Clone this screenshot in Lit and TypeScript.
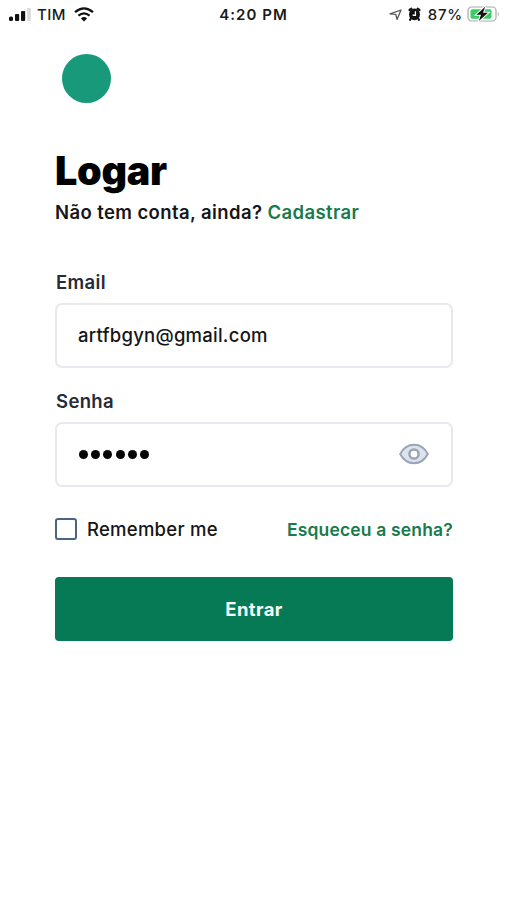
import { LitElement, html, css } from "lit";
import { customElement, property, state } from "lit/decorators.js";

@customElement("status-bar")
class StatusBar extends LitElement {
  static styles = css`
    :host {
      display: grid;
      grid-template-columns: 1fr auto 1fr;
      align-items: center;
      height: 28px;
      padding: 0 6px 0 8px;
      color: #1a1a1a;
      font-size: 15px;
      line-height: 26px;
    }
    svg { display: block; flex: none; }
    span { padding-top: 2px; }
    .left, .right { display: flex; align-items: center; }
    .right { justify-content: flex-end; }
    .bars { margin-right: 6px; }
    .carrier { margin-right: 8px; font-weight: 500; letter-spacing: 0.45px; }
    .time { margin-right: 1px; font-weight: 600; letter-spacing: 1.05px; }
    .arrow { margin-right: 6px; }
    .alarm { margin-right: 7px; }
    .pct { margin-right: 4px; font-weight: 500; letter-spacing: 0.75px; }
  `;
  render() {
    return html`
      <div class="left">
        <svg class="bars" width="23" height="16" viewBox="0 0 23 16">
          <rect x="1" y="10.5" width="4" height="4.5" rx="1.5" fill="#111" />
          <rect x="7" y="8" width="4.2" height="7" rx="1" fill="#111" />
          <rect x="13" y="5" width="4.2" height="10" rx="1" fill="#111" />
          <rect x="19" y="2" width="4" height="13" rx="1" fill="#dcdcdc" />
        </svg>
        <span class="carrier">TIM</span>
        <svg width="20" height="15" viewBox="0 0 20 15" fill="none" stroke="#111" stroke-width="2.2">
          <path d="M1 5.2Q10-2.4 19 5.2" />
          <path d="M4.4 8.7Q10 4 15.6 8.7" />
          <path d="M10 14.6L6.9 11.4Q10 8.8 13.1 11.4Z" fill="#111" stroke="none" />
        </svg>
      </div>
      <span class="time">4:20 PM</span>
      <div class="right">
        <svg class="arrow" width="13" height="13" viewBox="0 0 13 13" fill="none" stroke="#555" stroke-width="1.3" stroke-linejoin="round">
          <path d="M12 2L1 5.8L6.8 6.3L8 11.4Z" />
        </svg>
        <svg class="alarm" width="13" height="14" viewBox="0 0 14 14" preserveAspectRatio="none">
          <path d="M1.6 3L3.6 1.6M12.4 3L10.4 1.6M3 11.6L2.2 12.8M11 11.6L11.8 12.8" stroke="#111" stroke-width="2.2" stroke-linecap="round" />
          <circle cx="7" cy="7.4" r="5.9" fill="#111" />
          <path d="M8 4.3V8.2H5" fill="none" stroke="#fff" stroke-width="1.4" />
        </svg>
        <span class="pct">87%</span>
        <svg width="33" height="18" viewBox="0 0 33 18">
          <rect x="1" y="2" width="28" height="14" rx="3.6" fill="#fff" stroke="#aaa" stroke-width="1.2" />
          <rect x="3.5" y="4.3" width="21" height="9.4" rx="2" fill="#35cf63" />
          <path d="M30.8 6.7Q33 9 30.8 11.4Z" fill="#aaa" />
          <path d="M18.2 1.8L9.4 9.7H14L11.8 16L21 7.8H16Z" fill="#111" stroke="#fff" stroke-width="2" paint-order="stroke" />
        </svg>
      </div>
    `;
  }
}

@customElement("text-field")
class TextField extends LitElement {
  @property() label = "";
  @property() value = "";
  @property({ type: Boolean }) secret = false;

  static styles = css`
    :host { display: block; }
    .label {
      padding: 0 0 2px 1px;
      font-size: 18.5px;
      line-height: 22px;
      font-weight: 600;
      letter-spacing: 0.35px;
      color: #252b38;
    }
    .box {
      box-sizing: border-box;
      display: flex;
      align-items: center;
      justify-content: space-between;
      height: 65px;
      margin-top: 8px;
      padding: 0 22px 0 21px;
      border: 2px solid #e7e9f0;
      border-radius: 7px;
      background: #fff;
      font-size: 18.5px;
      font-weight: 500;
      letter-spacing: 0.25px;
      color: #151515;
    }
    .value { padding-bottom: 2px; }
    .dots { display: flex; gap: 3.2px; padding-left: 1px; }
    .dot { width: 9px; height: 9px; border-radius: 50%; background: #050505; }
    svg { display: block; margin-bottom: 2px; }
  `;
  render() {
    return html`
      <div class="label">${this.label}</div>
      <div class="box">
        ${this.secret
          ? html`
              <div class="dots">${[...this.value].map(() => html`<span class="dot"></span>`)}</div>
              <svg width="30" height="22" viewBox="0 0 30 22" stroke="#9ba5b6" stroke-width="2">
                <path d="M1.2 11C4.5 4.6 9.2 1.8 15 1.8S25.5 4.6 28.8 11C25.5 17.4 20.8 20.2 15 20.2S4.5 17.4 1.2 11Z" fill="#dde3ec" />
                <circle cx="15" cy="11" r="4.6" fill="#fff" stroke-width="2.5" />
              </svg>
            `
          : html`<span class="value">${this.value}</span>`}
      </div>
    `;
  }
}

@customElement("app-root")
class AppRoot extends LitElement {
  @state() private remember = false;

  static styles = css`
    :host {
      display: block;
      height: 900px;
      background: #fff;
      color: #161616;
      font-family: Inter, "Liberation Sans", sans-serif;
      overflow: hidden;
    }
    main { padding: 26px 53px 0 55px; }
    .logo { width: 49px; height: 49px; margin-left: 7px; border-radius: 50%; background: #18997a; }
    h1 {
      margin: 44px 0 0;
      font-size: 39.5px;
      line-height: 48px;
      font-weight: 900;
      letter-spacing: -0.3px;
      color: #000;
    }
    .sub { margin: 5px 0 0; font-size: 18.5px; line-height: 24px; font-weight: 600; letter-spacing: 0.4px; }
    .green { color: #177b4b; }
    .email { margin-top: 47px; }
    .password { margin-top: 22px; }
    .row { display: flex; align-items: center; height: 24px; margin-top: 30px; }
    .check { box-sizing: border-box; width: 22px; height: 22px; border: 2px solid #4b6485; border-radius: 3px; }
    .check.on { background: #4b6485; }
    .remember { margin-left: 10px; font-size: 18.5px; font-weight: 500; letter-spacing: 0.25px; }
    .forgot { margin-left: auto; font-size: 17.5px; font-weight: 600; letter-spacing: 0.16px; }
    .submit {
      display: block;
      width: 100%;
      height: 64px;
      margin-top: 36px;
      padding: 0;
      border: 0;
      border-radius: 4px;
      background: #067a54;
      color: #f4fbf8;
      font: 700 18.5px Inter, "Liberation Sans", sans-serif;
      letter-spacing: 0.4px;
    }
  `;
  render() {
    return html`
      <status-bar></status-bar>
      <main>
        <div class="logo"></div>
        <h1>Logar</h1>
        <p class="sub">Não tem conta, ainda? <span class="green">Cadastrar</span></p>
        <text-field class="email" label="Email" value="artfbgyn@gmail.com"></text-field>
        <text-field class="password" label="Senha" value="123456" secret></text-field>
        <div class="row">
          <span class="check ${this.remember ? "on" : ""}" @click=${() => (this.remember = !this.remember)}></span>
          <span class="remember">Remember me</span>
          <span class="forgot green">Esqueceu a senha?</span>
        </div>
        <button class="submit">Entrar</button>
      </main>
    `;
  }
}
